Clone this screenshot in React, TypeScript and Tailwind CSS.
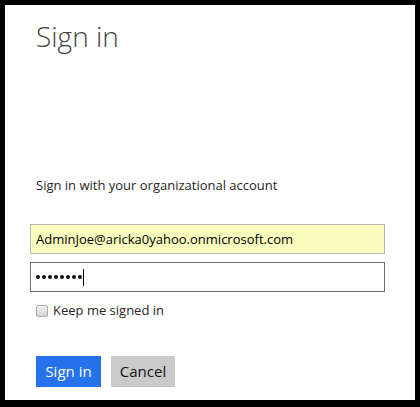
import React from "react";

const font = { fontFamily: '"Open Sans", "Segoe UI", sans-serif' };

export default function App() {
  return (
    <div className="w-[420px] h-[407px] bg-black pt-[5px] pl-[5px] pr-[5px] pb-[7px]" style={font}>
      <div className="h-full w-full bg-white pl-[25px] pt-[11px]">
        <h1 className="ml-[6px] text-[28px] leading-[40px] font-light text-[#444]">Sign in</h1>

        <p className="ml-[6px] mt-[120px] text-[13px] leading-[18px] text-[#262626]">
          Sign in with your organizational account
        </p>

        <div className="mt-[30px] flex w-[355px] flex-col gap-[8px]">
          <input
            type="text"
            readOnly
            value="AdminJoe@aricka0yahoo.onmicrosoft.com"
            className="h-[30px] w-full border border-[#b5b5b5] bg-[#fafdbd] px-[5px] text-[13px] text-black outline-none"
          />
          <div className="flex h-[30px] w-full items-center border border-[#6b6b6b] bg-white pl-[5px]">
            <div className="flex gap-[2px]">
              {Array.from({ length: 8 }).map((_, i) => (
                <span key={i} className="h-[4px] w-[4px] rounded-full bg-[#111]" />
              ))}
            </div>
            <span className="ml-[1px] h-[17px] w-px bg-black" />
          </div>
        </div>

        <label className="ml-[6px] mt-[9px] flex items-center gap-[5px] text-[13px] text-[#262626]">
          <span className="h-[12px] w-[12px] rounded-[2px] border border-[#a8a8a8] bg-gradient-to-b from-[#f2f2f2] to-[#d6d6d6]" />
          Keep me signed in
        </label>

        <div className="ml-[6px] mt-[35px] flex gap-[10px]">
          <button className="h-[31px] w-[65px] bg-[#2672ec] text-[15px] text-white">Sign in</button>
          <button className="h-[31px] w-[64px] bg-[#cacaca] text-[15px] text-[#111]">Cancel</button>
        </div>
      </div>
    </div>
  );
}
